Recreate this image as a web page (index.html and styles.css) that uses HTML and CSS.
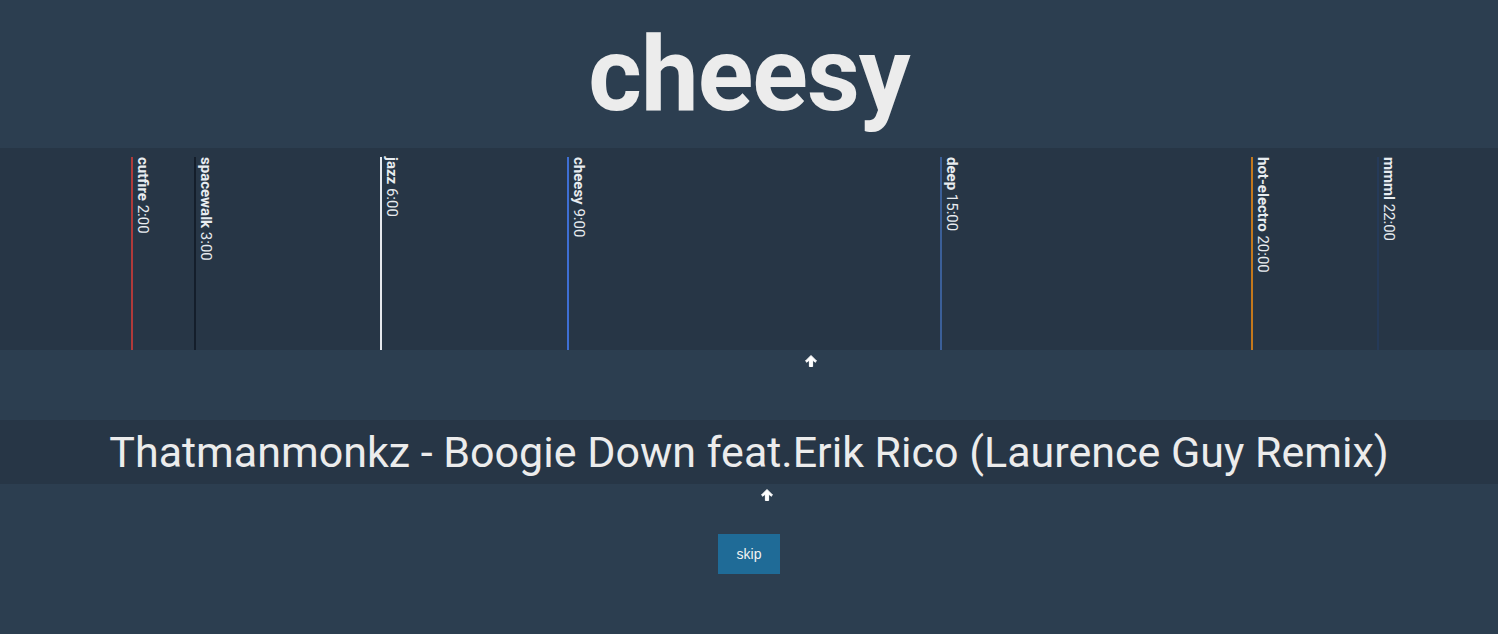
FILE: index.html
```html
<!DOCTYPE html>
<html>
<head>
<meta charset="utf-8">
<link rel="stylesheet" href="styles.css">
</head>
<body>
<header class="header"><h1 class="title">cheesy</h1></header>
<section class="timeline">
  <div class="marker" style="left:131px;--c:#b03a3a"><span class="name">cutfire</span> <span class="time">2:00</span></div>
  <div class="marker" style="left:194px;--c:#141e2b"><span class="name">spacewalk</span> <span class="time">3:00</span></div>
  <div class="marker" style="left:380px;--c:#e6e9ee"><span class="name">jazz</span> <span class="time">6:00</span></div>
  <div class="marker" style="left:567px;--c:#3e6fd4"><span class="name">cheesy</span> <span class="time">9:00</span></div>
  <div class="marker" style="left:940px;--c:#3b5f98"><span class="name">deep</span> <span class="time">15:00</span></div>
  <div class="marker" style="left:1251px;--c:#c4781c"><span class="name">hot-electro</span> <span class="time">20:00</span></div>
  <div class="marker" style="left:1377px;--c:#253a58"><span class="name">mmml</span> <span class="time">22:00</span></div>
</section>
<div class="now-row">
  <span class="arrow now-arrow" style="left:804px">
    <svg viewBox="0 0 14 14" width="14" height="14"><path fill="#fff" stroke="#fff" stroke-width="1" stroke-linejoin="round" d="M7 1.5 L12.5 7 L11 8.3 L8.6 5.9 V12.5 H5.4 V5.9 L3 8.3 L1.5 7 Z"/></svg>
  </span>
</div>
<section class="song"><h2 class="song-title">Thatmanmonkz - Boogie Down feat.Erik Rico (Laurence Guy Remix)</h2></section>
<div class="progress-row">
  <span class="arrow prog-arrow" style="left:760px">
    <svg viewBox="0 0 14 14" width="14" height="14"><path fill="#fff" stroke="#fff" stroke-width="1" stroke-linejoin="round" d="M7 1.5 L12.5 7 L11 8.3 L8.6 5.9 V12.5 H5.4 V5.9 L3 8.3 L1.5 7 Z"/></svg>
  </span>
</div>
<div class="actions"><button class="skip">skip</button></div>
</body>
</html>
```
FILE: styles.css
```css
* { box-sizing: border-box; }
html, body { margin: 0; padding: 0; }
body {
  background: #2c3e50;
  color: #ececec;
  font-family: Roboto, "Noto Sans", sans-serif;
  height: 634px;
  overflow: hidden;
}
.header {
  height: 148px;
  display: flex;
  justify-content: center;
  align-items: center;
}
.title {
  margin: 0;
  font-size: 103px;
  font-weight: 700;
  line-height: 1;
  color: #ececec;
  letter-spacing: -1px;
}
.timeline {
  position: relative;
  height: 202px;
  background: #273646;
}
.marker {
  position: absolute;
  top: 9px;
  bottom: 0;
  border-left: 2px solid var(--c);
  writing-mode: vertical-rl;
  font-size: 15px;
  line-height: 17px;
  color: #e8ecf0;
  padding-left: 1px;
  white-space: nowrap;
}
.marker .name { font-weight: 700; }
.marker .time { font-weight: 400; }
.now-row, .progress-row { position: relative; }
.now-row { height: 70px; }
.progress-row { height: 50px; }
.arrow { position: absolute; display: block; line-height: 0; }
.now-arrow { top: 4px; }
.prog-arrow { top: 4px; }
.song {
  height: 64px;
  background: #273646;
  display: flex;
  justify-content: center;
  align-items: center;
}
.song-title {
  margin: 0;
  font-size: 43px;
  font-weight: 400;
  color: #ececec;
  line-height: 1;
}
.actions { display: flex; justify-content: center; }
.skip {
  width: 62px;
  height: 40px;
  background: #1f6b97;
  color: #f2f2f2;
  border: none;
  font-family: "Liberation Sans", Arial, sans-serif;
  font-size: 14px;
  padding: 0;
}
```
